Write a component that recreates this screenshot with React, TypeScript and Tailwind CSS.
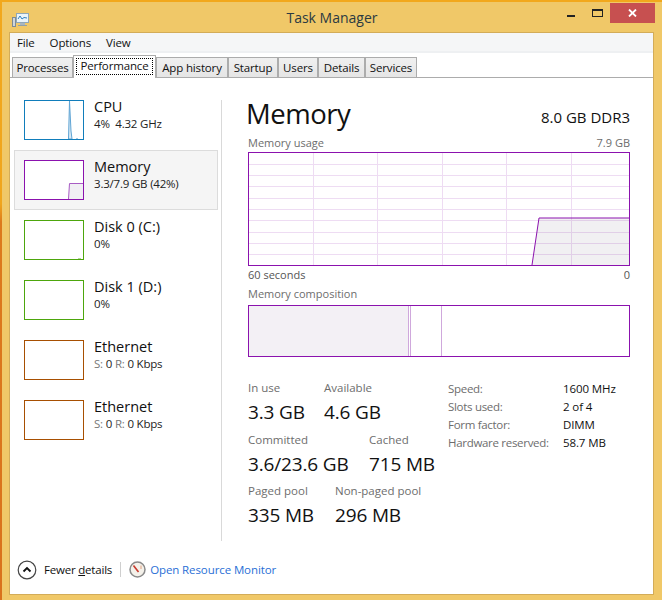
import type { ReactNode } from 'react';

const FONT = "font-['Open_Sans','Noto_Sans',sans-serif]";

const TABS = [
  { label: 'Processes', w: 'w-[61px]' },
  { label: 'Performance', w: 'w-[83px]', active: true },
  { label: 'App history', w: 'w-[72px]' },
  { label: 'Startup', w: 'w-[50px]' },
  { label: 'Users', w: 'w-[40px]' },
  { label: 'Details', w: 'w-[47px]' },
  { label: 'Services', w: 'w-[52px]' },
];

function AppIcon() {
  return (
    <svg width="17" height="16" viewBox="0 0 17 16">
      <rect x="0.5" y="5.5" width="3" height="9" fill="#cfd6dc" stroke="#7d8b96" />
      <rect x="4.5" y="1.5" width="12" height="9" fill="#eaf4fb" stroke="#8fa7b8" />
      <path d="M6 7 L8 4 L10 7 L12 5.5 L15 6" fill="none" stroke="#2f7fc1" />
      <rect x="8" y="11" width="5" height="2" fill="#a9b6c0" />
      <rect x="6" y="13" width="9" height="1" fill="#8fa0ac" />
    </svg>
  );
}

function Thumb({ color, children }: { color: string; children?: ReactNode }) {
  return (
    <div className={`relative w-[60px] h-[40px] mt-[9px] shrink-0 border bg-white ${color}`}>
      {children}
    </div>
  );
}

function SideItem({ thumb, title, sub, selected }: { thumb: ReactNode; title: string; sub: ReactNode; selected?: boolean }) {
  return (
    <div className={`h-[60px] flex items-start pl-[9px] border ${selected ? 'bg-[#f5f5f5] border-[#dcdcdc]' : 'border-transparent'}`}>
      {thumb}
      <div className="ml-[10px] pt-[6px]">
        <div className="text-[14.5px] leading-[19px] text-[#111]">{title}</div>
        <div className="text-[11.5px] leading-[15px] tracking-[-0.2px] text-[#222] whitespace-pre">{sub}</div>
      </div>
    </div>
  );
}

function NetSub() {
  return (
    <>
      <span className="text-[#777]">S:</span> 0 <span className="text-[#777]">R:</span> 0 Kbps
    </>
  );
}

function UsageGraph() {
  const hLines = [12, 23, 34, 46, 57, 68, 80, 91, 102];
  const vLines = [65, 129, 194, 258, 323];
  return (
    <svg width="382" height="114" viewBox="0 0 382 114" className="block">
      <rect x="0.5" y="0.5" width="381" height="113" fill="#fff" />
      {hLines.map(y => (
        <line key={y} x1="1" x2="381" y1={y + 0.5} y2={y + 0.5} stroke="#eedcf3" />
      ))}
      {vLines.map(x => (
        <line key={x} x1={x + 0.5} x2={x + 0.5} y1="1" y2="113" stroke="#eedcf3" />
      ))}
      <path d="M284 113 L291 66 L381 66 L381 113 Z" fill="#50405a" fillOpacity="0.08" />
      <path d="M284 113 L291 66 L381 66" fill="none" stroke="#8b12ae" />
      <rect x="0.5" y="0.5" width="381" height="113" fill="none" stroke="#8b12ae" />
    </svg>
  );
}

function Stat({ label, value, w }: { label: string; value: string; w: string }) {
  return (
    <div className={w}>
      <div className="text-[11.5px] leading-[15px] text-[#6d6d6d]">{label}</div>
      <div className="text-[19px] leading-[27px] mt-[4px] tracking-[-0.15px] text-[#111] whitespace-nowrap">{value}</div>
    </div>
  );
}

export default function App() {
  return (
    <div className={`w-[662px] h-[600px] overflow-hidden pl-[2px] pt-[2px] bg-[linear-gradient(180deg,#f2a81c_0%,#f0a51c_34%,#dc7a1c_37%,#d9721c_100%)] ${FONT}`}>
      <div className="w-[660px] h-[598px] bg-[#f0c868] flex flex-col">
        {/* Title bar */}
        <div className="h-[30px] flex items-start">
          <div className="w-[200px] pl-[10px] pt-[10px]">
            <AppIcon />
          </div>
          <div className="w-[260px] text-center text-[14px] leading-[20px] pt-[6px] text-[#2b3a42]">Task Manager</div>
          <div className="flex-1 flex justify-end pr-[7px] pt-[1px]">
            <div className="w-[26px] h-[20px] flex justify-center items-end pb-[6px]">
              <div className="w-[8px] h-[2px] bg-[#222]" />
            </div>
            <div className="w-[26px] h-[20px] flex justify-center pt-[6px]">
              <div className="w-[11px] h-[8px] border border-t-2 border-[#222]" />
            </div>
            <div className="w-[45px] h-[20px] bg-[#c75050] flex items-center justify-center">
              <svg width="9" height="8" viewBox="0 0 9 8">
                <path d="M1 0.5 L8 7.5 M8 0.5 L1 7.5" stroke="#fff" strokeWidth="1.8" />
              </svg>
            </div>
          </div>
        </div>

        {/* Client area */}
        <div className="ml-[7px] w-[645px] h-[563px] bg-white border border-[#d3ac58] text-[#111] flex flex-col">
          <div className="h-[18px] bg-[#f5f6f7] flex items-center pl-[7px] pt-[1px] gap-[15px] text-[11.5px] tracking-[-0.15px] text-[#111]">
            <span>File</span>
            <span>Options</span>
            <span>View</span>
          </div>
          <div className="h-[2px] bg-[#eef0f2]" />

          {/* Tabs */}
          <div className="h-[25px] pl-[2px] flex items-end border-b border-[#acacac]">
            {TABS.map(t =>
              t.active ? (
                <div key={t.label} className={`${t.w} h-[23px] -mb-px bg-white border border-b-0 border-[#acacac] p-[2px] pb-[3px] relative`}>
                  <div className="h-full flex items-center justify-center pb-[1px] border border-dotted border-black text-[11.5px] tracking-[-0.15px]">
                    {t.label}
                  </div>
                </div>
              ) : (
                <div key={t.label} className={`${t.w} h-[20px] flex items-center justify-center border border-b-0 border-[#acacac] bg-linear-to-b from-[#f0f0f0] to-[#e5e5e5] text-[11.5px] tracking-[-0.15px]`}>
                  {t.label}
                </div>
              ),
            )}
          </div>

          {/* Main */}
          <div className="flex-1 flex pl-[4px] pt-[12px]">
            <div className="w-[204px] shrink-0">
              <SideItem
                title="CPU"
                sub={'4%  4.32 GHz'}
                thumb={
                  <Thumb color="border-[#117dbb]">
                    <svg width="58" height="38" className="absolute left-0 top-0">
                      <path d="M43.5 38 L44.5 0 L46 30 L47 38 Z" fill="#d9eaf5" stroke="#5fa4d4" />
                      <path d="M51 37.5 h2" stroke="#a6cbe6" />
                    </svg>
                  </Thumb>
                }
              />
              <SideItem
                selected
                title="Memory"
                sub="3.3/7.9 GB (42%)"
                thumb={
                  <Thumb color="border-[#8b12ae]">
                    <svg width="58" height="38" className="absolute left-0 top-0">
                      <path d="M43.5 38 L44.5 22.5 L58 22.5 L58 38 Z" fill="#f1eff4" />
                      <path d="M43.5 38 L44.5 22.5 L58 22.5" fill="none" stroke="#a85cc4" />
                    </svg>
                  </Thumb>
                }
              />
              <SideItem
                title="Disk 0 (C:)"
                sub="0%"
                thumb={
                  <Thumb color="border-[#4da60c]">
                    <svg width="58" height="38" className="absolute left-0 top-0">
                      <path d="M53 37.5 h3" stroke="#b5d99b" />
                    </svg>
                  </Thumb>
                }
              />
              <SideItem title="Disk 1 (D:)" sub="0%" thumb={<Thumb color="border-[#4da60c]" />} />
              <SideItem title="Ethernet" sub={<NetSub />} thumb={<Thumb color="border-[#a74f01]" />} />
              <SideItem title="Ethernet" sub={<NetSub />} thumb={<Thumb color="border-[#a74f01]" />} />
            </div>

            <div className="ml-[3px] mt-[10px] w-px h-[441px] bg-[#d9d9d9]" />

            {/* Detail pane */}
            <div className="ml-[26px] w-[382px] pt-[8px]">
              <div className="flex items-end justify-between h-[32px]">
                <div className="text-[27.5px] leading-[32px] -ml-[2px] tracking-[-0.5px] text-[#111]">Memory</div>
                <div className="text-[15px] leading-[20px] pb-[3px] text-[#111]">8.0 GB DDR3</div>
              </div>
              <div className="flex justify-between text-[11px] leading-[15px] mt-[5px] text-[#6d6d6d]">
                <span>Memory usage</span>
                <span>7.9 GB</span>
              </div>
              <div className="mt-[2px]">
                <UsageGraph />
              </div>
              <div className="flex justify-between text-[11px] leading-[15px] mt-[1px] text-[#555]">
                <span>60 seconds</span>
                <span>0</span>
              </div>
              <div className="text-[11px] leading-[15px] mt-[4px] text-[#6d6d6d]">Memory composition</div>
              <div className="mt-[4px] h-[52px] border border-[#8b12ae] flex">
                <div className="w-[160px] bg-[#f3f0f5] border-r border-[#cfa8dc]" />
                <div className="w-[2px] border-r border-[#cfa8dc]" />
                <div className="w-[31px] border-r border-[#cfa8dc]" />
              </div>

              <div className="mt-[23px] flex">
                <div className="w-[200px] flex flex-col gap-[5.5px]">
                  <div className="flex">
                    <Stat label="In use" value="3.3 GB" w="w-[76px]" />
                    <Stat label="Available" value="4.6 GB" w="w-[100px]" />
                  </div>
                  <div className="flex">
                    <Stat label="Committed" value="3.6/23.6 GB" w="w-[121px]" />
                    <Stat label="Cached" value="715 MB" w="w-[79px]" />
                  </div>
                  <div className="flex">
                    <Stat label="Paged pool" value="335 MB" w="w-[87px]" />
                    <Stat label="Non-paged pool" value="296 MB" w="w-[100px]" />
                  </div>
                </div>
                <div className="text-[11.5px] leading-[18px]">
                  {[
                    ['Speed:', '1600 MHz'],
                    ['Slots used:', '2 of 4'],
                    ['Form factor:', 'DIMM'],
                    ['Hardware reserved:', '58.7 MB'],
                  ].map(([k, v]) => (
                    <div key={k} className="flex">
                      <span className="w-[115px] tracking-[-0.3px] text-[#6d6d6d]">{k}</span>
                      <span className="text-[#111] tracking-[-0.1px]">{v}</span>
                    </div>
                  ))}
                </div>
              </div>
            </div>
          </div>

          {/* Footer */}
          <div className="h-[52px] flex items-start pl-[7px] pt-[18px]">
            <svg width="20" height="20" viewBox="0 0 20 20">
              <circle cx="10" cy="10" r="8.8" fill="#fff" stroke="#444" strokeWidth="1.2" />
              <path d="M6.5 11.5 L10 8 L13.5 11.5" fill="none" stroke="#111" strokeWidth="1.8" />
            </svg>
            <span className="ml-[7px] text-[11.5px] leading-[20px] tracking-[-0.2px] text-[#111]">
              Fewer <span className="underline">d</span>etails
            </span>
            <div className="ml-[8px] mt-[2px] w-px h-[15px] bg-[#cfcfcf]" />
            <svg width="17" height="17" viewBox="0 0 17 17" className="ml-[8px] mt-[1px]">
              <circle cx="8.5" cy="8.5" r="7.5" fill="#f4f1ea" stroke="#8a8a8a" strokeWidth="1.5" />
              <path d="M4.5 4.5 L9.5 11" stroke="#c8382c" strokeWidth="1.6" />
              <path d="M12 4.5 L12 8" stroke="#e0a080" strokeWidth="1" />
            </svg>
            <span className="ml-[4px] text-[11.5px] leading-[20px] tracking-[-0.1px] text-[#2a6fd6]">Open Resource Monitor</span>
          </div>
        </div>
      </div>
    </div>
  );
}
